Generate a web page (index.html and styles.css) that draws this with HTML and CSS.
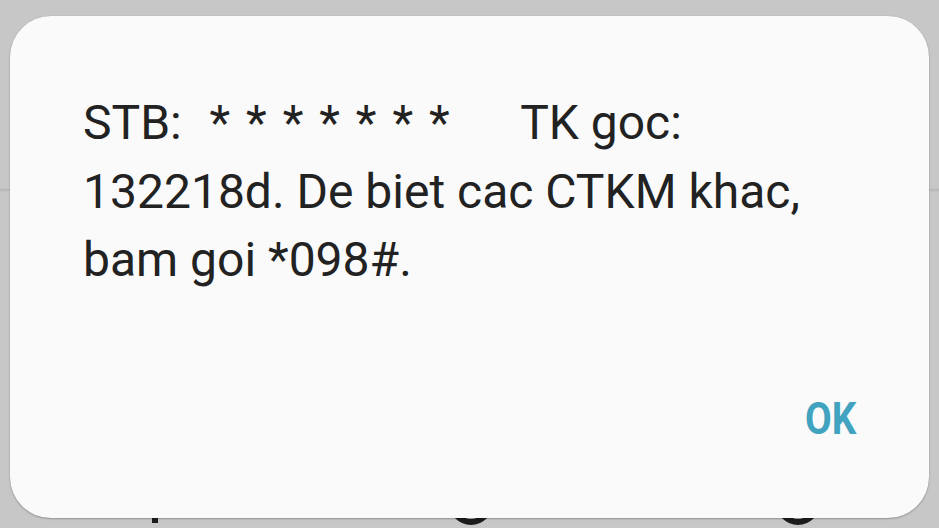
FILE: index.html
```html
<!DOCTYPE html>
<html>
<head>
<meta charset="utf-8">
<link rel="stylesheet" href="styles.css">
</head>
<body>
<div class="screen">
  <div class="top-area"></div>
  <div class="bottom-area">
    <div class="navbar">
      <span class="nav-bar-icon"></span>
      <span class="nav-circle"></span>
      <span class="nav-circle"></span>
    </div>
  </div>
  <div class="dialog">
    <p class="message"><span class="line">STB:  <span class="stars">* * * * * * *</span>      TK goc:</span><span class="line">132218d. De biet cac CTKM khac,</span><span class="line">bam goi *098#.</span></p>
    <div class="actions">
      <span class="ok-btn"><span class="ok-text">OK</span></span>
    </div>
  </div>
</div>
</body>
</html>
```
FILE: styles.css
```css
html, body {
  margin: 0;
  padding: 0;
}
body {
  width: 939px;
  height: 528px;
  overflow: hidden;
  background: #c7c7c7;
  font-family: Roboto, "Noto Sans", sans-serif;
}
.screen {
  position: relative;
  width: 939px;
  height: 528px;
  display: flex;
  flex-direction: column;
}
.top-area {
  height: 189px;
  border-bottom: 1px solid #b6b6b6;
  box-shadow: 0 1px 0 #bcbcbc, 0 2px 0 #c2c2c2;
  flex: none;
}
.bottom-area {
  flex: 1;
  display: flex;
  flex-direction: column;
  justify-content: flex-end;
}
.navbar {
  height: 50px;
  position: relative;
  display: flex;
  align-items: flex-start;
}
.nav-bar-icon {
  margin-left: 152px;
  margin-top: 5px;
  width: 6px;
  height: 40px;
  background: #1c1c1c;
}
.nav-circle {
  margin-top: 3px;
  width: 32px;
  height: 32px;
  border: 6px solid #1c1c1c;
  border-radius: 50%;
}
.nav-circle:nth-child(2) {
  margin-left: 291px;
}
.nav-circle:nth-child(3) {
  margin-left: 283px;
}
.dialog {
  position: absolute;
  left: 10px;
  top: 16px;
  width: 919px;
  height: 502px;
  box-sizing: border-box;
  background: #fafafa;
  border-radius: 41px;
  box-shadow: 0 1px 2px rgba(0,0,0,0.25), 0 0 1px rgba(0,0,0,0.15);
  padding: 73px 73px 0 73px;
  display: flex;
  flex-direction: column;
}
.message {
  margin: 0;
  font-size: 48px;
  line-height: 68.5px;
  color: #222222;
  white-space: pre;
  display: flex;
  flex-direction: column;
}
.line {
  display: block;
}
.stars {
  padding-left: 4px;
  word-spacing: 4px;
}
.actions {
  display: flex;
  justify-content: flex-end;
  margin-top: auto;
  padding-bottom: 74px;
  padding-right: 0px;
}
.ok-btn {
  display: inline-block;
  color: #41a3c0;
  font-weight: 700;
  font-size: 44px;
  line-height: 50px;
}
.ok-text {
  display: inline-block;
  transform: scaleX(0.88);
  transform-origin: right center;
}
```
